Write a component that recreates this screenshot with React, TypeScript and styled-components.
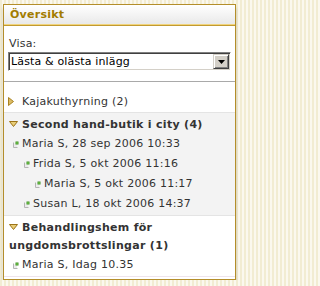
import React from 'react';
import styled, { createGlobalStyle } from 'styled-components';

const Global = createGlobalStyle`
  html, body { margin: 0; padding: 0; }
  body {
    background-color: #f6f1dc;
    background-image: repeating-linear-gradient(90deg, #f2ecd2 0 2px, #fbf8ee 2px 4px);
    font-family: "DejaVu Sans", Verdana, sans-serif;
    font-size: 11px;
    letter-spacing: 0.2px;
    color: #333;
  }
`;

const Page = styled.div`
  width: 239px;
  box-sizing: border-box;
  padding: 4px 3px 0 3px;
`;

const Panel = styled.section`
  border: 1px solid #b48e2a;
  background: #fff;
  box-shadow: 0 4px 3px rgba(0, 0, 0, 0.2);
`;

const Header = styled.h2`
  margin: 0;
  height: 19px;
  line-height: 19px;
  padding-left: 6px;
  font-size: 11px;
  font-weight: bold;
  letter-spacing: 0.25px;
  color: #a27c00;
  background: linear-gradient(#ffffff, #e8e8e8);
  border-bottom: 1px solid #c29a30;
  box-shadow: 0 -1px 0 #f0d47e inset;
  box-sizing: content-box;
  padding-bottom: 1px;
`;

const Filter = styled.div`
  padding: 11px 4px 10px 4px;
  border-bottom: 1px solid #a9a9a9;
  display: flex;
  flex-direction: column;
  gap: 1px;
`;

const Label = styled.label`
  line-height: 14px;
  padding-left: 1px;
  color: #333;
`;

const SelectBox = styled.div`
  height: 19px;
  box-sizing: border-box;
  display: flex;
  align-items: center;
  border: 1px solid;
  border-color: #808080 #ffffff #ffffff #808080;
  box-shadow: inset 1px 1px 0 #404040, inset -1px -1px 0 #d4d0c8;
  background: #fff;
  padding: 1px 1px 1px 2px;
`;

const SelectText = styled.span`
  flex: 1;
  color: #000;
  line-height: 15px;
  white-space: nowrap;
  letter-spacing: 0.15px;
`;

const ArrowButton = styled.span`
  width: 16px;
  height: 15px;
  box-sizing: border-box;
  background: #d4d0c8;
  border: 1px solid;
  border-color: #d4d0c8 #404040 #404040 #d4d0c8;
  box-shadow: inset 1px 1px 0 #ffffff, inset -1px -1px 0 #808080;
  display: flex;
  align-items: center;
  justify-content: center;
`;

const List = styled.div`
  padding: 8px 0 2px 0;
`;

const Section = styled.div<{ $shade?: boolean; $last?: boolean }>`
  padding: 3px 5px 1px 5px;
  background: ${(p) => (p.$shade ? '#f3f3f3' : '#fff')};
  border-bottom: 1px solid ${(p) => (p.$last ? '#eee4ec' : '#e4e4e4')};
  display: flex;
  flex-direction: column;
`;

const Heading = styled.div<{ $bold?: boolean }>`
  line-height: 18px;
  font-weight: ${(p) => (p.$bold ? 'bold' : 'normal')};
  letter-spacing: ${(p) => (p.$bold ? '0.3px' : '0.25px')};
  color: #333;
`;

const Toggle = styled.span`
  display: inline-block;
  width: 13px;
  vertical-align: baseline;
`;

const Word = styled.span``;

const Count = styled.span``;

const Post = styled.div<{ $level: number }>`
  line-height: 18px;
  padding: 1px 0 1px ${(p) => 4 + (p.$level - 1) * 11}px;
  display: flex;
  align-items: center;
  gap: 3px;
  white-space: nowrap;
  letter-spacing: 0.25px;
  color: #333;
`;

const PostIcon = () => (
  <svg width="6" height="7" viewBox="0 0 6 7" style={{ flex: 'none' }}>
    <path d="M0.5 1.5 V6.5 H4.5" fill="none" stroke="#b4b4b4" />
    <rect x="1" y="2.5" width="3" height="3.5" fill="#ececec" />
    <rect x="2.5" y="0.5" width="3" height="3" fill="#3f8f22" />
    <rect x="3" y="1" width="2" height="2" fill="#5cb03a" />
  </svg>
);

const RightTri = () => (
  <svg width="6" height="9" viewBox="0 0 6 9" style={{ marginLeft: -1, verticalAlign: '-1px' }}>
    <path d="M0.5 0.5 L5.5 4.5 L0.5 8.5 Z" fill="#dcbc64" stroke="#a88224" strokeLinejoin="round" />
  </svg>
);

const DownTri = () => (
  <svg width="9" height="6" viewBox="0 0 9 6" style={{ verticalAlign: '1px' }}>
    <path d="M0.5 0.5 H8.5 L4.5 5.5 Z" fill="#e8cd78" stroke="#9c7418" strokeLinejoin="round" />
  </svg>
);

const DropArrow = () => (
  <svg width="7" height="4" viewBox="0 0 7 4">
    <path d="M0 0 H7 L3.5 4 Z" fill="#000" />
  </svg>
);

type PostData = { level: number; text: string };
type Thread = { title: string[]; count: number; open: boolean; shade?: boolean; posts: PostData[] };

const threads: Thread[] = [
  { title: ['Kajakuthyrning'], count: 2, open: false, posts: [] },
  {
    title: ['Second hand-butik i city'],
    count: 4,
    open: true,
    shade: true,
    posts: [
      { level: 1, text: 'Maria S, 28 sep 2006 10:33' },
      { level: 2, text: 'Frida S, 5 okt 2006 11:16' },
      { level: 3, text: 'Maria S, 5 okt 2006 11:17' },
      { level: 2, text: 'Susan L, 18 okt 2006 14:37' },
    ],
  },
  {
    title: ['Behandlingshem för', 'ungdomsbrottslingar'],
    count: 1,
    open: true,
    posts: [{ level: 1, text: 'Maria S, Idag 10.35' }],
  },
];

export default function App() {
  return (
    <>
      <Global />
      <Page>
        <Panel>
          <Header>Översikt</Header>
          <Filter>
            <Label>Visa:</Label>
            <SelectBox role="combobox">
              <SelectText>Lästa &amp; olästa inlägg</SelectText>
              <ArrowButton>
                <DropArrow />
              </ArrowButton>
            </SelectBox>
          </Filter>
          <List>
            {threads.map((t, i) => (
              <Section key={t.title.join(' ')} $shade={t.shade} $last={i === threads.length - 1}>
                <Heading $bold={t.open}>
                  <Toggle>{t.open ? <DownTri /> : <RightTri />}</Toggle>
                  {t.title.map((w) => (
                    <React.Fragment key={w}>
                      <Word>{w}</Word>{' '}
                    </React.Fragment>
                  ))}
                  <Count>({t.count})</Count>
                </Heading>
                {t.posts.map((p) => (
                  <Post key={p.text} $level={p.level}>
                    <PostIcon />
                    <span>{p.text}</span>
                  </Post>
                ))}
              </Section>
            ))}
          </List>
        </Panel>
      </Page>
    </>
  );
}
